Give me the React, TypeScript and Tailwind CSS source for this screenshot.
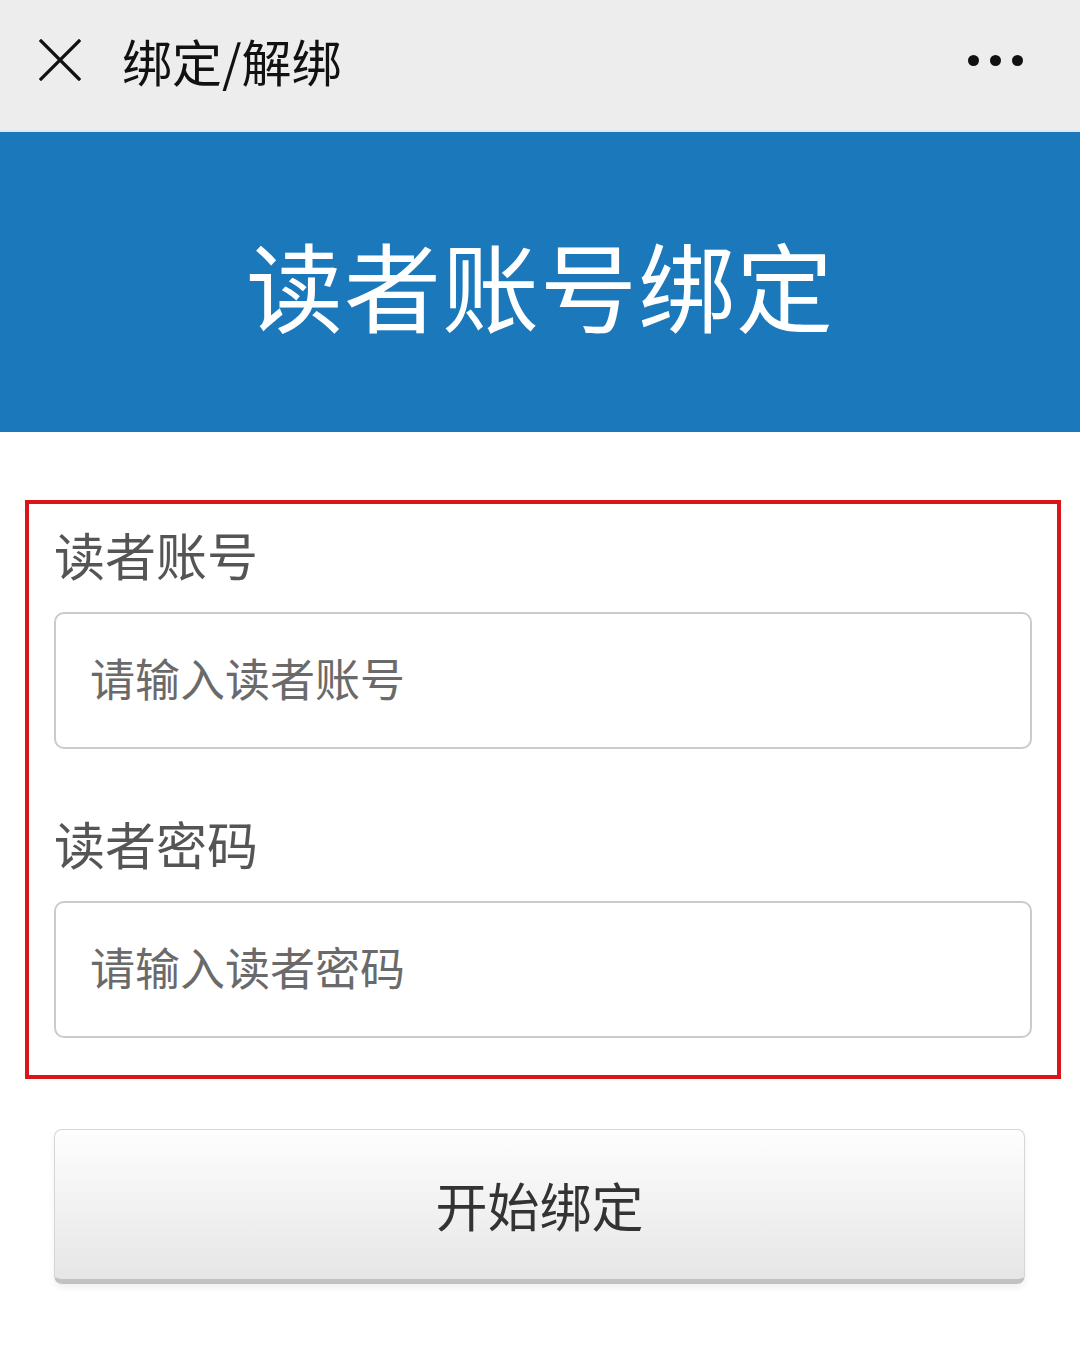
const font = { fontFamily: '"Noto Sans CJK SC", "Noto Sans", sans-serif' };

function Field({ label, placeholder, type }: { label: string; placeholder: string; type: string }) {
  return (
    <div>
      <div className="h-[80px] pt-[25px] text-[51px] leading-[51px] text-[#555]">{label}</div>
      <input
        type={type}
        placeholder={placeholder}
        className="mt-[28px] block h-[137px] w-full rounded-[10px] border-2 border-[#cbcbcb] bg-white pb-[6px] pl-[34px] pr-[34px] text-[45px] text-[#333] outline-none placeholder:text-[#6a6a6a]"
        style={font}
      />
    </div>
  );
}

export default function App() {
  return (
    <div className="min-h-[1364px] w-[1080px] bg-white" style={font}>
      <div className="flex h-[130px] items-center bg-[#ededed] pb-[10px] pl-[39px] pr-[57px]">
        <svg width="42" height="42" viewBox="0 0 42 42" fill="none" stroke="#111" strokeWidth="3.2" strokeLinecap="square">
          <path d="M2 2 L40 40 M40 2 L2 40" />
        </svg>
        <div className="ml-[41px] text-[50px] leading-none text-[#111]">绑定/解绑</div>
        <div className="ml-auto flex items-center gap-[11px]">
          <span className="h-[11px] w-[11px] rounded-full bg-[#111]" />
          <span className="h-[11px] w-[11px] rounded-full bg-[#111]" />
          <span className="h-[11px] w-[11px] rounded-full bg-[#111]" />
        </div>
      </div>
      <div className="h-[2px] bg-[#dbe9f4]" />
      <div className="flex h-[300px] items-center justify-center bg-[#1a78bb]">
        <h1 className="text-[97px] leading-none tracking-[1px] text-white">读者账号绑定</h1>
      </div>

      <div className="ml-[25px] mt-[68px] h-[579px] w-[1036px] border-4 border-[#d9141b] px-[25px]">
        <Field label="读者账号" placeholder="请输入读者账号" type="text" />
        <div className="h-[44px]" />
        <Field label="读者密码" placeholder="请输入读者密码" type="password" />
      </div>

      <div className="pl-[54px] pr-[55px] pt-[50px]">
        <button
          className="flex h-[155px] w-full items-center justify-center rounded-[8px] border border-[#d6d6d6] border-b-[5px] border-b-[#c2c2c2] bg-gradient-to-b from-[#fefefe] to-[#e6e6e6] text-[52px] text-[#333] shadow-[0_4px_6px_rgba(0,0,0,0.06)]"
          style={font}
        >
          开始绑定
        </button>
      </div>
    </div>
  );
}
